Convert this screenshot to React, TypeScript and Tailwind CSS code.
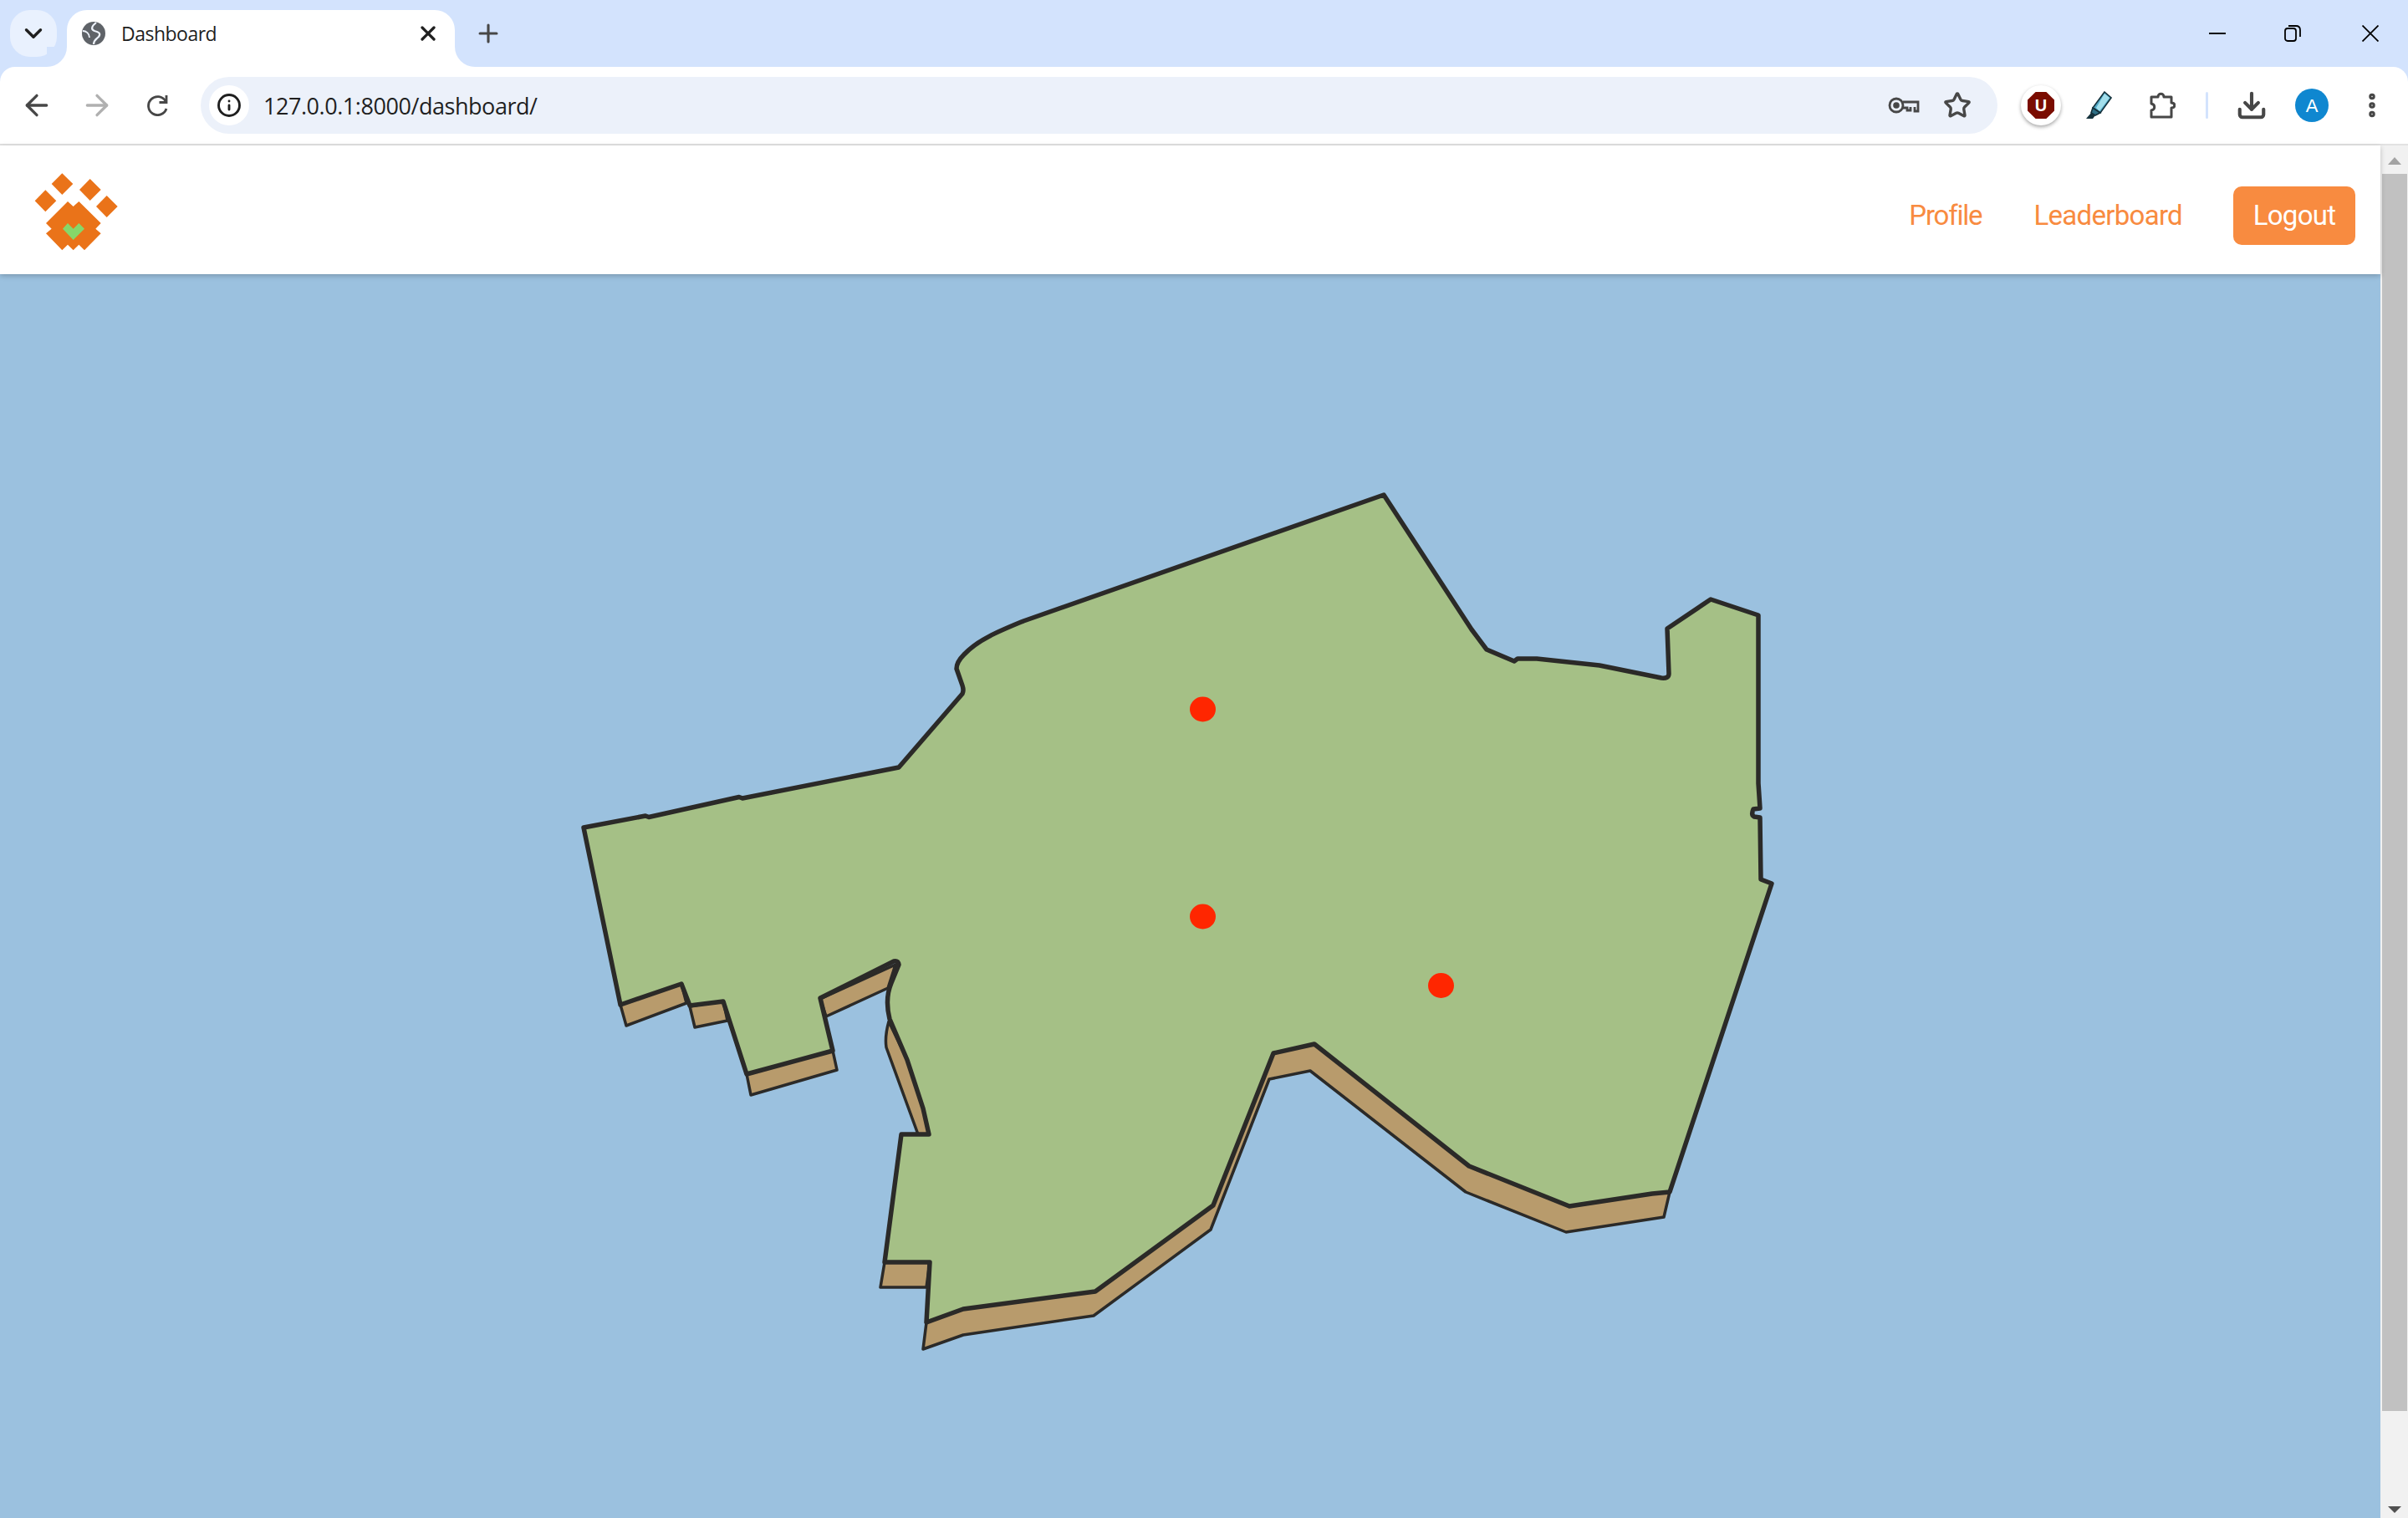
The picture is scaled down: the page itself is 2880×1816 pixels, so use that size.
import React from 'react';
import { ArrowLeft, ArrowRight, ChevronDown, Download, EllipsisVertical, Info, Plus, Star, X } from 'lucide-react';

// --- Browser chrome bits ---

const Slot: React.FC<{ children: React.ReactNode; className?: string }> = ({ children, className }) => (
  <div className={`flex h-full w-[72px] shrink-0 items-center justify-center ${className ?? ''}`}>{children}</div>
);

const GlobeIcon = () => (
  <svg viewBox="0 0 28 28" className="h-[28px] w-[28px]">
    <circle cx="14" cy="14" r="14" fill="#5f6368" />
    <path d="M17 1 C12 5 10 9 15 11 C20 12 23 14 20 18 C17 21 14 22 14 27" fill="none" stroke="#eef3fb" strokeWidth="2.2" />
    <path d="M1 11 C5 11 9 14 9 19" fill="none" stroke="#eef3fb" strokeWidth="1.8" />
  </svg>
);

const ReloadIcon = () => (
  <svg viewBox="0 0 26 26" className="h-[26px] w-[26px]" fill="none" stroke="#474747" strokeWidth="2.8">
    <path d="M23 8 A11 11 0 1 0 24 17" />
    <path d="M24 1 V9.5 H15.5" />
  </svg>
);

const KeyIcon = () => (
  <svg viewBox="0 0 38 20" className="h-[20px] w-[38px]" fill="none" stroke="#474747" strokeWidth="2.8">
    <circle cx="10" cy="10" r="8" />
    <circle cx="10" cy="10" r="2.4" fill="#474747" />
    <path d="M18 6 H36 V17 H32 V12 M27 12 V16 H23 V13 H18" />
  </svg>
);

const PenIcon = () => (
  <svg viewBox="0 0 32 34" className="h-[34px] w-[32px]">
    <path d="M23 1 L31 8 L18 26 L9 20 Z" fill="#4fa6c4" stroke="#14303a" strokeWidth="1.6" />
    <path d="M23 3 L29 8 L17 24 L13 20 Z" fill="#a3dfec" />
    <path d="M9 20 L18 26 L12 29 L7 26 Z" fill="#2e6f86" stroke="#14303a" strokeWidth="1.6" />
    <path d="M7 26 L1 33 H9 L12 29 Z" fill="#16333d" />
  </svg>
);

const PuzzleIcon = () => (
  <svg viewBox="0 0 32 32" className="h-[32px] w-[32px]" fill="none" stroke="#474747" strokeWidth="3" strokeLinejoin="round">
    <path d="M3 6 H11 C11 1 18 1 18 6 H27 V13 C32 13 32 19 27 19 V30 H3 V22 C8 21 8 15 3 14 Z" />
  </svg>
);

const UBlockBadge = () => (
  <div className="flex h-[48px] w-[48px] items-center justify-center rounded-full bg-white shadow-[0_2px_4px_rgba(0,0,0,0.35)]">
    <div className="flex h-[32px] w-[32px] items-center justify-center bg-[#7a0c00] text-[20px] font-bold text-white [clip-path:polygon(30%_0,70%_0,100%_30%,100%_70%,70%_100%,30%_100%,0_70%,0_30%)] [font-family:'Liberation_Sans',sans-serif]">
      U
    </div>
  </div>
);

const TabStrip = () => (
  <div className="flex h-[80px] shrink-0 bg-[#d3e3fd] pl-[12px]">
    <div className="mt-[12px] flex h-[56px] w-[56px] items-center justify-center rounded-[24px] bg-[#e9f1fe]">
      <ChevronDown size={34} strokeWidth={2.4} color="#1f1f1f" />
    </div>
    <div className="relative mt-[12px] ml-[12px] flex h-[68px] w-[464px] items-start rounded-t-[24px] bg-white pt-[14px] pl-[18px]">
      <div className="absolute bottom-0 -left-[24px] h-[24px] w-[24px] bg-white">
        <div className="h-full w-full rounded-br-[24px] bg-[#d3e3fd]" />
      </div>
      <div className="absolute bottom-0 -right-[24px] h-[24px] w-[24px] bg-white">
        <div className="h-full w-full rounded-bl-[24px] bg-[#d3e3fd]" />
      </div>
      <GlobeIcon />
      <span className="ml-[19px] text-[23px] leading-[28px] text-[#1f1f1f] [font-family:'Open_Sans',sans-serif] tracking-[-0.5px]">Dashboard</span>
      <X size={28} strokeWidth={2.8} color="#1f1f1f" className="absolute top-[14px] right-[18px]" />
    </div>
    <div className="ml-[16px] flex h-full w-[48px] items-center justify-center">
      <Plus size={34} strokeWidth={2.2} color="#474747" />
    </div>
    <div className="ml-auto flex h-full items-center">
      <div className="flex w-[84px] justify-center">
        <div className="h-[2px] w-[20px] bg-black" />
      </div>
      <div className="flex w-[96px] justify-center">
        <svg viewBox="0 0 20 20" className="h-[20px] w-[20px]" fill="none" stroke="#000" strokeWidth="1.8">
          <rect x="1" y="4" width="13" height="15" rx="3" />
          <path d="M5 1 H14 C17 1 19 3 19 6 V14" />
        </svg>
      </div>
      <div className="flex w-[90px] justify-center">
        <svg viewBox="0 0 20 20" className="h-[20px] w-[20px]" fill="none" stroke="#000" strokeWidth="1.8">
          <path d="M0.5 0.5 L19.5 19.5 M19.5 0.5 L0.5 19.5" />
        </svg>
      </div>
    </div>
  </div>
);

const Toolbar = () => (
  <div className="flex h-[92px] shrink-0 items-center rounded-t-[18px] bg-white pl-[8px]">
    <Slot><ArrowLeft size={40} strokeWidth={2} color="#474747" /></Slot>
    <Slot><ArrowRight size={40} strokeWidth={2} color="#b0b0b0" /></Slot>
    <Slot><ReloadIcon /></Slot>
    <div className="ml-[16px] flex h-[68px] w-[2149px] shrink-0 items-center rounded-[34px] bg-[#ecf1fa] pl-[10px]">
      <div className="flex h-[48px] w-[48px] items-center justify-center rounded-full bg-white">
        <Info size={30} strokeWidth={2.3} color="#1f1f1f" />
      </div>
      <span className="ml-[17px] text-[27px] leading-none text-[#1f1f1f] [font-family:'Open_Sans',sans-serif] tracking-[-0.45px]">127.0.0.1:8000/dashboard/</span>
      <div className="ml-auto flex items-center pr-[16px]">
        <div className="flex w-[64px] justify-center"><KeyIcon /></div>
        <div className="flex w-[64px] justify-center"><Star size={34} strokeWidth={2.4} color="#474747" /></div>
      </div>
    </div>
    <Slot className="ml-[16px]"><UBlockBadge /></Slot>
    <Slot className="-ml-[3px]"><PenIcon /></Slot>
    <Slot className="ml-[4px]"><PuzzleIcon /></Slot>
    <div className="ml-[16px] h-[32px] w-[3px] shrink-0 rounded-full bg-[#d3e3fd]" />
    <Slot className="ml-[16px]"><Download size={38} strokeWidth={2.6} color="#474747" /></Slot>
    <Slot>
      <div className="flex h-[40px] w-[40px] items-center justify-center rounded-full bg-[#0f87d0] text-[22px] text-white [font-family:'Liberation_Sans',sans-serif]">A</div>
    </Slot>
    <Slot><EllipsisVertical size={36} strokeWidth={3} color="#474747" /></Slot>
  </div>
);

// --- Page header ---

const Logo = () => (
  <svg viewBox="0 0 420 360" className="ml-[20px] h-[120px] w-[140px]">
    <g fill="#ea7319">
      <polygon points="163,49 202,87 163,126 125,87" />
      <polygon points="263,69 302,108 263,147 225,108" />
      <polygon points="103,109 142,148 103,187 65,148" />
      <polygon points="323,129 362,168 323,207 285,168" />
      <polygon points="105,228 183,150 203,168 223,150 302,228 283,248 302,265 243,325 223,305 203,325 183,305 163,325 105,265 125,248" />
    </g>
    <polygon points="165,248 183,228 203,248 223,228 243,248 203,288" fill="#86d76a" />
  </svg>
);

const Header = () => (
  <div className="relative z-10 flex h-[154px] shrink-0 items-center bg-white shadow-[0_2px_6px_rgba(0,0,0,0.22)]">
    <Logo />
    <div className="ml-auto flex items-center pt-[14px] pr-[30px] text-[33px] tracking-[-0.7px] text-[#f88b40] [font-family:Roboto,sans-serif]">
      <a className="mr-[62px] tracking-[-1.2px]">Profile</a>
      <a className="mr-[61px]">Leaderboard</a>
      <button className="flex h-[70px] w-[146px] items-center justify-center rounded-[10px] bg-[#f88b40] text-white">Logout</button>
    </div>
  </div>
);

// --- Island map, coordinates are page pixels ---

const LAND =
  'M698 990 L772 976 L776 977.5 L884 953.5 L888 955 L1075 918 L1151 830 Q1153 826 1151 820 L1144 800 Q1144 792 1153 783 C1170 765 1195 755 1224 743 L1655 592 L1760 753 L1778 777 L1811 791 L1815 788 L1838 788 L1913 796 L1987 811 Q1996 812 1996 806 L1994 752 L2046 717 L2103 736 L2103 937 L2105 967 L2097 968 Q2094 975 2098 977 L2105 978 L2106 1052 L2119 1057 L1997 1426 L1976 1428 L1877 1443 L1757 1395 L1572 1249 L1523 1260 L1451 1442 L1310 1545 L1152 1566 L1108 1582 L1112 1510 L1058 1510 L1078 1357 L1111 1357 L1104 1326 L1085 1268 L1064 1219 Q1058 1195 1066 1176 L1075 1154 Q1074 1149 1069 1150 L981 1194 L996 1257 L893 1285 L865 1198 L825 1203 L815 1177 L742 1202 Z';

const WALLS = [
  'M742 1202 L749 1227 L821 1200 L815 1177 Z',
  'M825 1204 L831 1229 L870 1221 L865 1197 Z',
  'M893 1285 L898 1310 L1001 1280 L996 1257 Z',
  'M981 1195 L988 1216 L1062 1182 L1071 1154 Z',
  'M1063 1222 Q1058 1240 1060 1253 L1098 1357 L1111 1357 L1104 1326 L1085 1268 Z',
  'M1058 1510 L1053 1540 L1108 1540 L1112 1510 Z',
  'M1108 1582 L1104 1614 L1152 1597 L1308 1574 L1448 1471 L1518 1291 L1567 1281 L1753 1426 L1873 1474 L1990 1456 L1997 1426 L1976 1428 L1877 1443 L1757 1395 L1572 1249 L1523 1260 L1451 1442 L1310 1545 L1152 1566 Z',
];

const IslandMap = () => (
  <div className="min-h-0 flex-1 bg-[#9bc1df]">
    <svg viewBox="0 328 2847 1488" className="block h-full w-full">
      {WALLS.map((d, i) => (
        <path key={i} d={d} fill="#b89b6c" stroke="#2b2a28" strokeWidth="3.5" strokeLinejoin="round" />
      ))}
      <path d={LAND} fill="#a5c086" stroke="#2b2a28" strokeWidth="5.5" strokeLinejoin="round" />
      <ellipse cx="1438.5" cy="848.5" rx="15.5" ry="15" fill="#ff2600" />
      <ellipse cx="1438.5" cy="1096.5" rx="15.5" ry="15" fill="#ff2600" />
      <ellipse cx="1723.5" cy="1179" rx="15.5" ry="15" fill="#ff2600" />
    </svg>
  </div>
);

const Scrollbar = () => (
  <div className="flex w-[33px] shrink-0 flex-col bg-[#f1f1f1] pl-[2px]">
    <div className="flex h-[34px] shrink-0 items-center justify-center pt-[2px] pr-[1px]">
      <div className="h-0 w-0 border-x-[8px] border-b-[9px] border-x-transparent border-b-[#a3a3a3]" />
    </div>
    <div className="h-[1480px] w-[30px] bg-[#c1c1c1]" />
    <div className="flex flex-1 items-end justify-center pr-[1px] pb-[6px]">
      <div className="h-0 w-0 border-x-[8px] border-t-[8px] border-x-transparent border-t-[#505050]" />
    </div>
  </div>
);

// --- Main App ---

const App: React.FC = () => (
  <div className="flex h-[1816px] w-[2880px] flex-col overflow-hidden bg-[#d3e3fd]">
    <TabStrip />
    <Toolbar />
    <div className="h-[2px] shrink-0 bg-[#e2e2e2]" />
    <div className="flex min-h-0 flex-1">
      <div className="flex min-w-0 flex-1 flex-col">
        <Header />
        <IslandMap />
      </div>
      <Scrollbar />
    </div>
  </div>
);

export default App;
